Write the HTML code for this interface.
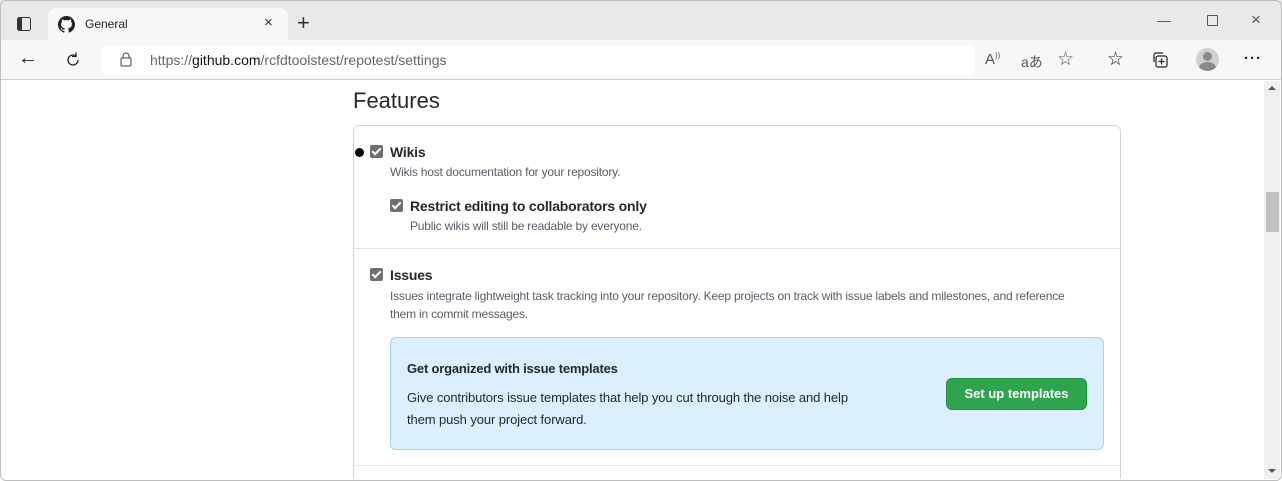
<!DOCTYPE html>
<html><head><meta charset="utf-8"><style>
*{margin:0;padding:0;box-sizing:border-box}
html,body{width:1282px;height:481px;overflow:hidden}
body{background:#fff;font-family:"Liberation Sans",sans-serif;position:relative}
.abs{position:absolute}
.tabs{left:0;top:0;width:1282px;height:40px;background:#e9e9e9}
.tab{left:48px;top:8px;width:240px;height:33px;background:#f7f7f7;border-radius:8px 8px 0 0}
.bar{left:0;top:40px;width:1282px;height:40px;background:#f7f7f7;border-bottom:1px solid #d0d0d0}
.addr{left:101px;top:45px;width:874px;height:30px;background:#fff;border-radius:6px}
.cb{width:13px;height:13px;background:#6f6f6f;border-radius:2px}
.cb:after{content:"";position:absolute;left:4px;top:1px;width:3px;height:7px;border:solid #fff;border-width:0 2px 2px 0;transform:rotate(45deg)}
.h{font-weight:bold;font-size:14px;color:#24292e;letter-spacing:-0.2px}
.d{font-size:12px;color:#586069;letter-spacing:-0.2px}
</style></head><body>
<div class="abs tabs"></div>
<div class="abs tab"></div>
<svg class="abs" style="left:16px;top:16px" width="16" height="16"><rect x="1.5" y="1.5" width="13" height="13" rx="2" fill="none" stroke="#333"/><rect x="2" y="2" width="4" height="12" fill="#333"/></svg>
<svg class="abs" style="left:58px;top:16px" width="17" height="17" viewBox="0 0 16 16"><path fill="#222" d="M8 0C3.58 0 0 3.58 0 8c0 3.54 2.29 6.53 5.470 7.59.4.07.55-.17.55-.38v-1.33c-2.23.48-2.7-1.07-2.7-1.07-.36-.92-.89-1.17-.89-1.17-.73-.5.06-.49.06-.49.8.06 1.23.82 1.23.82.72 1.23 1.87.87 2.33.67.07-.52.28-.87.51-1.07-1.78-.2-3.64-.89-3.64-3.95 0-.87.31-1.59.82-2.15-.08-.2-.36-1.02.08-2.12 0 0 .67-.21 2.2.82A7.6 7.6 0 018 3.86c.68 0 1.36.09 2 .27 1.53-1.04 2.2-.82 2.2-.82.44 1.1.16 1.92.08 2.12.51.56.82 1.27.82 2.15 0 3.07-1.87 3.75-3.65 3.95.29.25.54.73.54 1.48v2.2c0 .21.15.46.55.38A8.01 8.01 0 0016 8c0-4.42-3.58-8-8-8z"/></svg>
<div class="abs" style="left:85px;top:17px;font-size:12px;color:#222">General</div>
<div class="abs" style="left:264px;top:14px;font-size:15px;color:#333">×</div>
<div class="abs" style="left:297px;top:10px;font-size:22px;color:#333;font-weight:300">+</div>
<div class="abs" style="left:1157px;top:12px;font-size:14px;color:#555">—</div>
<div class="abs" style="left:1207px;top:15px;width:11px;height:11px;border:1px solid #555;border-radius:1px"></div>
<div class="abs" style="left:1251px;top:10px;font-size:17px;color:#555">×</div>
<div class="abs bar"></div>
<div class="abs addr"></div>
<div class="abs" style="left:18px;top:47px;font-size:20px;color:#222">←</div>
<svg class="abs" style="left:64px;top:51px" width="18" height="18"><path d="M14 9a5 5 0 1 1-2-4" fill="none" stroke="#222" stroke-width="1.3"/><path d="M12 1.5v4h-4" fill="none" stroke="#222" stroke-width="1.3"/></svg>
<svg class="abs" style="left:120px;top:52px" width="12" height="15"><rect x="1" y="6" width="10" height="8" rx="1" fill="none" stroke="#444"/><path d="M3 6V4a3 3 0 0 1 6 0v2" fill="none" stroke="#444"/></svg>
<div class="abs" style="left:150px;top:52px;font-size:14px;color:#666">https://<span style="color:#111">github.com</span>/rcfdtoolstest/repotest/settings</div>
<div class="abs" style="left:985px;top:51px;font-size:15px;color:#555">A<sup style="font-size:8px">))</sup></div>
<div class="abs" style="left:1021px;top:52px;font-size:14px;color:#555">aあ</div>
<div class="abs" style="left:1057px;top:48px;font-size:19px;color:#555">☆</div>
<div class="abs" style="left:1107px;top:48px;font-size:19px;color:#222">☆</div>
<svg class="abs" style="left:1151px;top:50px" width="20" height="20"><rect x="5" y="6" width="11" height="11" rx="2" fill="none" stroke="#222" stroke-width="1.2"/><path d="M3 12V5a2 2 0 0 1 2-2h7" fill="none" stroke="#222" stroke-width="1.2"/><path d="M10.5 8.5v6M7.5 11.5h6" stroke="#222" stroke-width="1.2"/></svg>
<div class="abs" style="left:1196px;top:48px;width:23px;height:23px;border-radius:50%;background:#d0d0d0;overflow:hidden"><div class="abs" style="left:7px;top:4px;width:9px;height:9px;border-radius:50%;background:#8a8a8a"></div><div class="abs" style="left:3px;top:14px;width:17px;height:12px;border-radius:50%;background:#8a8a8a"></div></div>
<div class="abs" style="left:1244px;top:50px;font-size:15px;color:#222;font-weight:bold;letter-spacing:1px">···</div>

<div class="abs" style="left:1264px;top:81px;width:16px;height:398px;background:#f0f0f0"></div>
<div class="abs" style="left:1266px;top:192px;width:13px;height:40px;background:#c1c1c1"></div>
<div class="abs" style="left:1268px;top:86px;border:4px solid transparent;border-bottom:4px solid #555;border-top:0"></div>
<div class="abs" style="left:1268px;top:469px;border:4px solid transparent;border-top:4px solid #555;border-bottom:0"></div>

<div class="abs" style="left:353px;top:88px;font-size:22px;color:#24292e">Features</div>
<div class="abs" style="left:353px;top:125px;width:768px;height:354px;border:1px solid #d1d5da;border-bottom:0;border-radius:6px 6px 0 0"></div>
<div class="abs" style="left:354px;top:248px;width:766px;height:1px;background:#e1e4e8"></div>
<div class="abs" style="left:354px;top:465px;width:766px;height:1px;background:#e1e4e8"></div>
<div class="abs" style="left:355px;top:148px;width:9px;height:9px;border-radius:50%;background:#000"></div>
<div class="abs cb" style="left:370px;top:145px"></div>
<div class="abs h" style="left:390px;top:144px">Wikis</div>
<div class="abs d" style="left:390px;top:165px">Wikis host documentation for your repository.</div>
<div class="abs cb" style="left:390px;top:199px"></div>
<div class="abs h" style="left:410px;top:198px">Restrict editing to collaborators only</div>
<div class="abs d" style="left:410px;top:219px">Public wikis will still be readable by everyone.</div>
<div class="abs cb" style="left:370px;top:268px"></div>
<div class="abs h" style="left:390px;top:267px">Issues</div>
<div class="abs d" style="left:390px;top:287px;line-height:18px;width:700px">Issues integrate lightweight task tracking into your repository. Keep projects on track with issue labels and milestones, and reference them in commit messages.</div>
<div class="abs" style="left:390px;top:337px;width:714px;height:113px;background:#dbf0fc;border:1px solid #a8d4f2;border-radius:6px"></div>
<div class="abs" style="left:407px;top:361px;font-size:13px;font-weight:bold;color:#24292e;letter-spacing:-0.2px">Get organized with issue templates</div>
<div class="abs" style="left:407px;top:387px;font-size:13px;color:#24292e;line-height:22px;width:465px;letter-spacing:-0.1px">Give contributors issue templates that help you cut through the noise and help them push your project forward.</div>
<div class="abs" style="left:946px;top:378px;width:141px;height:32px;background:#2ea44f;border:1px solid #28923f;border-radius:6px;color:#fff;font-weight:bold;font-size:13px;text-align:center;line-height:30px">Set up templates</div>
<div class="abs" style="left:0;top:0;width:1282px;height:481px;border:1px solid #bdbdbd;border-radius:6px;pointer-events:none"></div>
</body></html>
